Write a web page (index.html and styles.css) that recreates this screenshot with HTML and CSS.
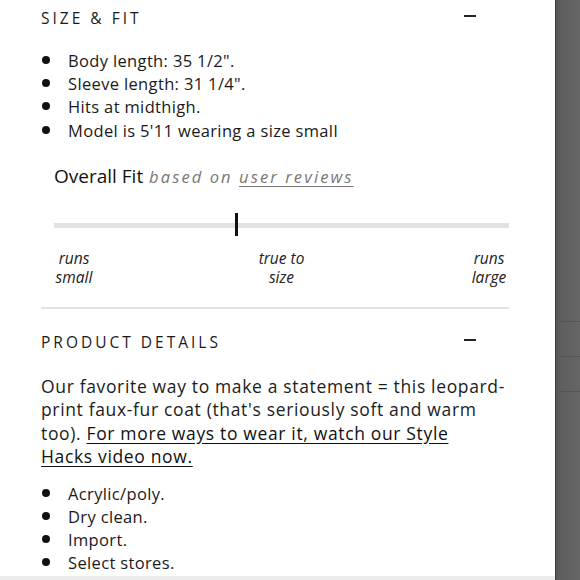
FILE: index.html
```html
<!DOCTYPE html>
<html>
<head>
<meta charset="utf-8">
<link rel="stylesheet" href="styles.css">
</head>
<body>
<div class="page">
  <main class="panel">
    <section class="section size">
      <div class="sec-head">
        <h2 class="sec-title">SIZE &amp; FIT</h2>
        <span class="toggle"></span>
      </div>
      <ul class="bullets">
        <li>Body length: 35 1/2".</li>
        <li>Sleeve length: 31 1/4".</li>
        <li>Hits at midthigh.</li>
        <li>Model is 5'11 wearing a size small</li>
      </ul>
      <div class="fit">
        <div class="fit-title">Overall Fit <span class="based">based on <u>user reviews</u></span></div>
        <div class="track"><span class="marker" style="left: 40%"></span></div>
        <div class="scale">
          <span class="lbl"><span>runs</span><span>small</span></span>
          <span class="lbl"><span>true to</span><span>size</span></span>
          <span class="lbl"><span>runs</span><span>large</span></span>
        </div>
      </div>
    </section>
    <section class="section details">
      <div class="sec-head">
        <h2 class="sec-title">PRODUCT DETAILS</h2>
        <span class="toggle"></span>
      </div>
      <p class="desc">Our favorite way to make a statement = this leopard-print faux-fur coat (that's seriously soft and warm too). <a href="#">For more ways to wear it, watch our Style<br>Hacks video now.</a></p>
      <ul class="bullets">
        <li>Acrylic/poly.</li>
        <li>Dry clean.</li>
        <li>Import.</li>
        <li>Select stores.</li>
      </ul>
    </section>
  </main>
  <aside class="side">
    <div class="side-seg"></div>
    <div class="side-seg"></div>
    <div class="side-seg"></div>
  </aside>
</div>
</body>
</html>
```
FILE: styles.css
```css
* { box-sizing: border-box; }
html, body { margin: 0; padding: 0; height: 100%; overflow: hidden; background: #fff; }
body { font-family: "Open Sans", "Noto Sans", sans-serif; color: #1c1c1c; }
.page { display: flex; width: 580px; height: 580px; }
.panel { width: 555px; height: 580px; padding: 0 46px 0 41px; background: #fff; border-bottom: 4px solid #ececec; overflow: hidden; }
.side { width: 25px; height: 580px; background: linear-gradient(90deg, #555 0, #5e5e5e 4px, #666 100%); border-left: 1px solid #3f3f3f; display: flex; flex-direction: column; }
.side-seg { flex: none; height: 35px; border-bottom: 1px solid #555; }
.side-seg:first-child { height: 322px; }

.sec-head { display: flex; justify-content: space-between; align-items: flex-start; height: 38px; padding-top: 8px; }
.sec-title { margin: 0; font-size: 15.5px; line-height: 20px; font-weight: 400; letter-spacing: 3px; color: #1a1a1a; }
.toggle { width: 12px; height: 2px; background: #222; margin-right: 33px; margin-top: 7px; }

.bullets { list-style: none; margin: 0; padding: 0; }
.bullets li { position: relative; padding-left: 27px; font-size: 16.5px; line-height: 23.2px; letter-spacing: 0.35px; color: #1a1a1a; }
.bullets li::before { content: ""; position: absolute; left: 1px; top: 7px; width: 8px; height: 8px; border-radius: 50%; background: #111; }
.size .bullets { margin-top: 11px; }

.fit { padding: 22px 0 0 13px; }
.fit-title { font-size: 19px; line-height: 24px; letter-spacing: 0; color: #111; }
.based { font-style: italic; color: #777; letter-spacing: 2.1px; font-size: 16.5px; margin-left: 1px; }
.based u { text-underline-offset: 3px; }
.track { position: relative; height: 5px; background: #e2e2e2; margin-top: 34px; }
.marker { position: absolute; top: -10px; width: 3px; height: 23px; background: #111; margin-left: -1px; }
.scale { display: flex; justify-content: space-between; margin-top: 21px; padding-bottom: 20px; border-bottom: 2px solid #e3e3e3; margin-left: -13px; padding-left: 13px; }
.lbl { width: 40px; font-style: italic; font-size: 15.5px; line-height: 19px; color: #222; text-align: center; white-space: nowrap; display: flex; flex-direction: column; align-items: center; }

.details .sec-head { margin-top: 23px; height: 22px; padding-top: 0; }
.desc { margin: 21px 0 0; font-size: 17.5px; line-height: 23.5px; letter-spacing: 0.65px; color: #1c1c1c; }
.desc a { color: #111; text-decoration: underline; text-underline-offset: 3px; }
.details .bullets { margin-top: 13px; }
```
